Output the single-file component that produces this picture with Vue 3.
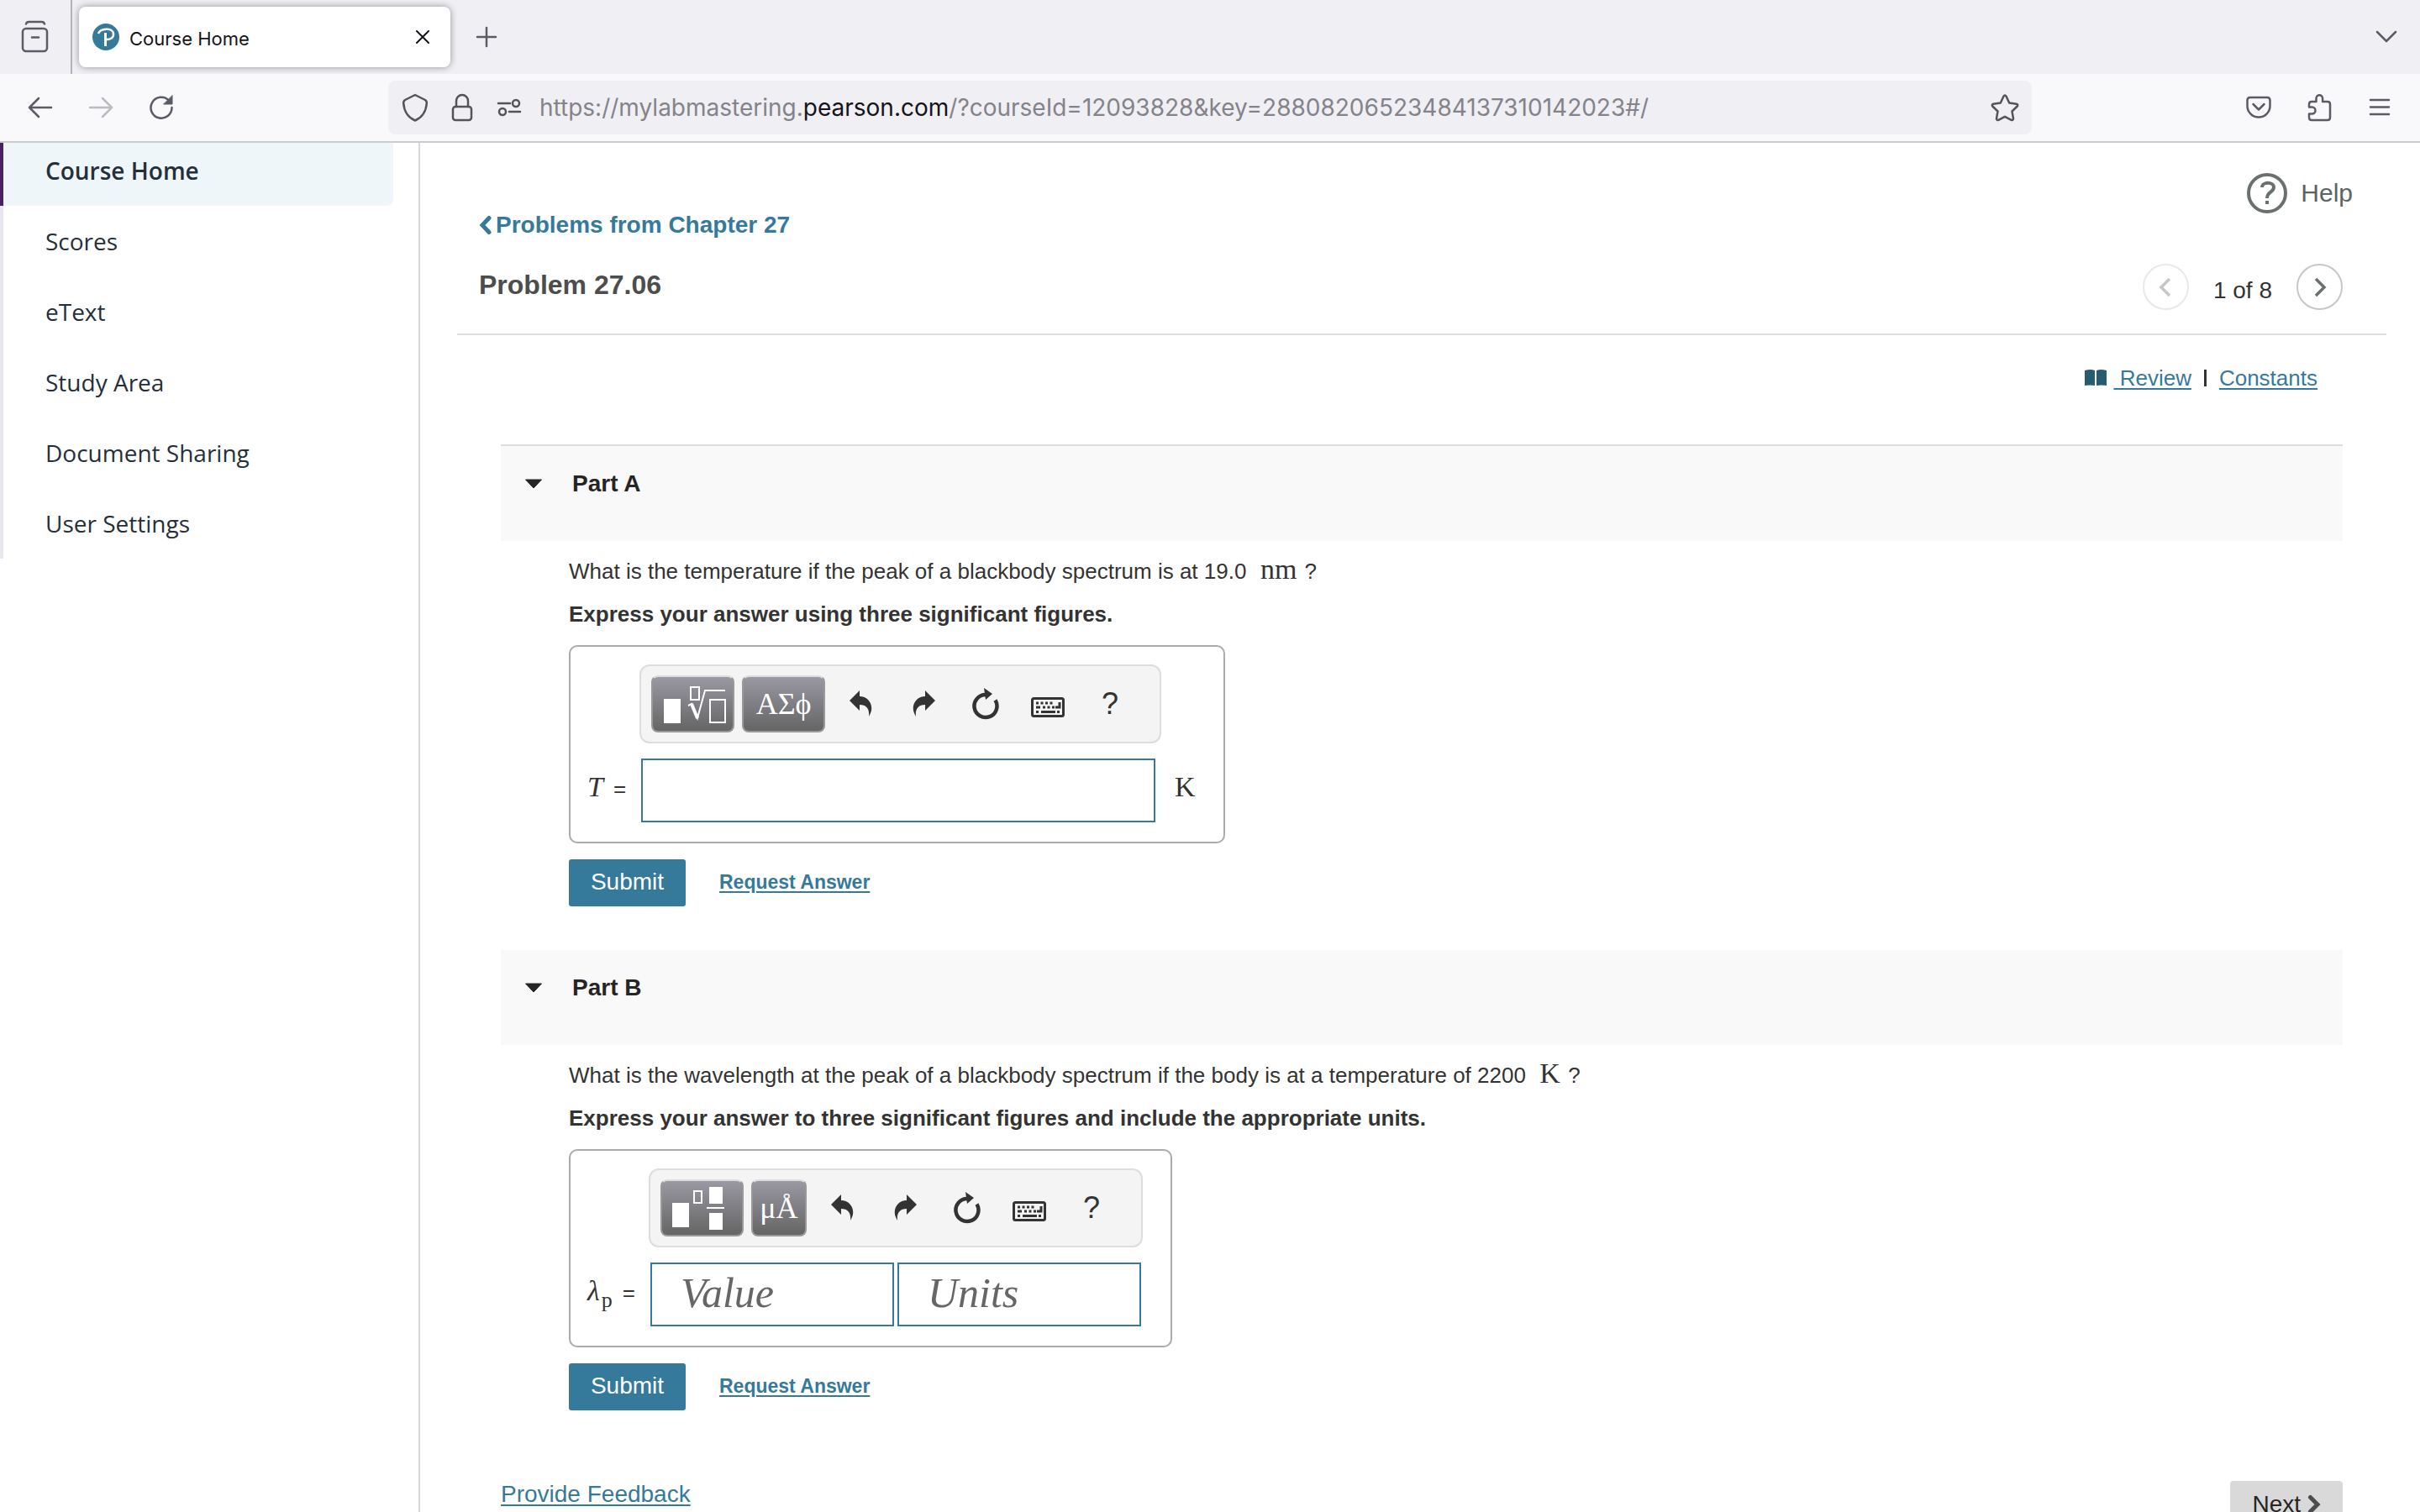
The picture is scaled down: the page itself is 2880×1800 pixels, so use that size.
<template>
  <div class="browser">
    <header class="tab-bar">
      <button class="icon-btn history" aria-label="Recent browsing">
        <svg width="34" height="40" viewBox="0 0 34 40" class="stroke">
          <path d="M6 4.500C6.500 2.500 8 2 9.500 2h15c1.500 0 3 .5 3.500 2.500" />
          <rect x="2" y="10" width="29" height="27" rx="4" />
          <path d="M13 20.500h8" />
        </svg>
      </button>
      <div class="tab">
        <svg width="32" height="32" viewBox="0 0 32 32">
          <circle cx="16" cy="16" r="16" fill="#357a9b" />
          <path d="M7 12c2-6 17-8 18 0 .5 5-4 7.500-8.500 7" fill="none" stroke="#fff" stroke-width="2.500" />
          <path d="M15.500 11v16" fill="none" stroke="#fff" stroke-width="3" />
        </svg>
        <span class="tab-title">Course Home</span>
        <button class="icon-btn close" aria-label="Close tab">
          <svg width="18" height="18" viewBox="0 0 18 18" class="stroke dark"><path d="M2 2l14 14M16 2L2 16" /></svg>
        </button>
      </div>
      <button class="icon-btn new-tab" aria-label="New tab">
        <svg width="26" height="26" viewBox="0 0 26 26" class="stroke"><path d="M13 2v22M2 13h22" /></svg>
      </button>
      <button class="icon-btn all-tabs" aria-label="List all tabs">
        <svg width="26" height="16" viewBox="0 0 26 16" class="stroke"><path d="M2 2l11 11L24 2" /></svg>
      </button>
    </header>

    <div class="nav-bar">
      <div class="nav-buttons">
        <button class="icon-btn" aria-label="Back">
          <svg width="30" height="26" viewBox="0 0 30 26" class="stroke"><path d="M28 13H2M13 2L2 13l11 11" /></svg>
        </button>
        <button class="icon-btn" aria-label="Forward" disabled>
          <svg width="30" height="26" viewBox="0 0 30 26" class="stroke faded"><path d="M2 13h26M17 2l11 11-11 11" /></svg>
        </button>
        <button class="icon-btn" aria-label="Reload">
          <svg width="30" height="30" viewBox="0 0 30 30" class="stroke">
            <path d="M24 6.500A12.500 12.500 0 1 0 27.500 15" />
            <path d="M28 1v10H18z" fill="#5b5b66" stroke-width="1" />
          </svg>
        </button>
      </div>
      <div class="url-bar">
        <svg width="32" height="34" viewBox="0 0 32 34" class="stroke gray">
          <path d="M16 2l12 6c1.500 1 2 2 1.800 4C29 22 24 29 16 32.500 8 29 3 22 2.200 12 2 10 2.500 9 4 8z" />
        </svg>
        <svg width="32" height="34" viewBox="0 0 32 34" class="stroke gray">
          <rect x="5" y="16" width="22" height="16" rx="3" />
          <path d="M9 16V9a7 7 0 0 1 14 0v7" />
        </svg>
        <svg width="32" height="34" viewBox="0 0 32 34" class="stroke gray">
          <circle cx="24" cy="12" r="4" /><circle cx="8" cy="22" r="4" />
          <path d="M3 12h14M16 22h13" />
        </svg>
        <div class="url" role="textbox" aria-label="Address">https://mylabmastering.<b>pearson.com</b>/?courseId=12093828&amp;key=28808206523484137310142023#/</div>
        <button class="icon-btn" aria-label="Bookmark this page">
          <svg width="34" height="34" viewBox="0 0 34 34" class="stroke gray">
            <path d="M15.500 3.500a1.700 1.700 0 0 1 3 0l3.700 8 8.500 1.200c1.500.2 2 1.800 1 2.800l-6.200 6 1.500 8.600c.2 1.400-1.200 2.300-2.400 1.700L17 27.800l-7.600 4c-1.200.6-2.600-.3-2.400-1.700L8.500 21.500l-6.200-6c-1-1-.5-2.600 1-2.800l8.500-1.200z" />
          </svg>
        </button>
      </div>
      <div class="extras">
        <button class="icon-btn" aria-label="Save to Pocket">
          <svg width="30" height="28" viewBox="0 0 30 28" class="stroke">
            <path d="M5 2h20q3.500 0 3.500 3.500V12a13.500 13.500 0 0 1-27 0V5.500Q1.500 2 5 2zM8.500 10l6.500 6.500 6.500-6.500" />
          </svg>
        </button>
        <button class="icon-btn" aria-label="Extensions">
          <svg width="30" height="34" viewBox="0 0 30 34" class="stroke">
            <path d="M5 10h5.500V6a3.800 3.800 0 0 1 7.600 0v4H24q3 0 3 3v16q0 3-3 3H5q-3 0-3-3v-4.500h3.500a4 4 0 0 0 0-8H2V13q0-3 3-3z" />
          </svg>
        </button>
        <button class="icon-btn" aria-label="Open application menu">
          <svg width="26" height="22" viewBox="0 0 26 22" class="stroke"><path d="M2 2h22M2 10.500h22M2 19h22" /></svg>
        </button>
      </div>
    </div>

    <div class="page">
      <nav class="sidebar">
        <ul>
          <li v-for="item in menu" :key="item">
            <a href="#" :class="{ active: item === current }" @click.prevent="current = item">{{ item }}</a>
          </li>
        </ul>
      </nav>

      <main class="content">
        <div class="problem-header">
          <div class="titles">
            <a href="#" class="back-link">
              <svg width="16" height="24" viewBox="0 0 16 24"><path d="M12 3.500L4 12l8 8.500" fill="none" stroke="#357a9b" stroke-width="5" stroke-linecap="round" /></svg>
              <span>Problems from Chapter 27</span>
            </a>
            <h1>Problem 27.06</h1>
          </div>
          <div class="tools">
            <a href="#" class="help">
              <svg width="48" height="48" viewBox="0 0 48 48" fill="none" stroke="#6a7070" stroke-width="4">
                <circle cx="24" cy="24" r="22" />
                <path d="M18 17c0-7 14-7 14 0 0 6-8 5-8 13M24 33v4" />
              </svg>
              <span>Help</span>
            </a>
            <div class="pager">
              <button aria-label="Previous problem" :disabled="index === 1" @click="index--">
                <svg width="16" height="24" viewBox="0 0 16 24"><path d="M13 2L3 12l10 10" /></svg>
              </button>
              <span class="count">{{ index }} of {{ total }}</span>
              <button aria-label="Next problem" :disabled="index === total" @click="index++">
                <svg width="16" height="24" viewBox="0 0 16 24"><path d="M3 2l10 10L3 22" /></svg>
              </button>
            </div>
          </div>
        </div>

        <div class="resources">
          <svg width="26" height="20" viewBox="0 0 26 20" fill="#255c70"><path d="M0 1q7-2 12 0v18q-6-1-12 0zM14 1q5-2 12 0v18q-6-1-12 0z" /></svg>
          <a href="#" class="review">&nbsp;Review</a>
          <span class="bar"></span>
          <a href="#">Constants</a>
        </div>

        <section v-for="part in parts" :key="part.id" class="part">
          <h2>
            <button @click="part.open = !part.open">
              <svg width="22" height="12" viewBox="0 0 22 12"><path d="M1.500 1h19L11 11z" fill="#252525" stroke="#252525" stroke-linejoin="round" /></svg>
              <span>Part {{ part.id }}</span>
            </button>
          </h2>
          <div v-if="part.open" class="part-body">
            <p>{{ part.question }} &nbsp;<span class="math">{{ part.unit }}</span> ?</p>
            <p><strong>{{ part.hint }}</strong></p>

            <div class="answer-box">
              <div class="toolbar">
                <button v-if="part.id === 'A'" class="palette wide" aria-label="Templates">
                  <svg width="94" height="62" viewBox="0 0 94 62" fill="none" stroke="#fff" stroke-width="2">
                    <rect x="12" y="25" width="20" height="29" fill="#fff" stroke="none" />
                    <rect x="44" y="11" width="10" height="15" />
                    <path d="M41 33l4-2 7 17 9-33h24" />
                    <path d="M45 31l7 17" stroke-width="4" />
                    <rect x="67" y="26" width="18" height="27" />
                  </svg>
                </button>
                <button v-else class="palette wide" aria-label="Templates">
                  <svg width="94" height="62" viewBox="0 0 94 62" fill="#fff">
                    <rect x="12" y="25" width="20" height="29" />
                    <rect x="38" y="11" width="9" height="14" fill="none" stroke="#fff" stroke-width="2" />
                    <rect x="56" y="6" width="16" height="20" />
                    <rect x="53" y="30" width="21" height="2" />
                    <rect x="56" y="37" width="16" height="20" />
                  </svg>
                </button>
                <button class="palette" :class="{ wide: part.id === 'A' }">{{ part.symbols }}</button>
                <div class="actions">
                  <button aria-label="Undo">
                    <svg width="28" height="32" viewBox="0 0 28 32"><path d="M0 12L12 0v7c11 0 19 12 11 24 1-8-2-14-11-14v7z" /></svg>
                  </button>
                  <button aria-label="Redo">
                    <svg width="28" height="32" viewBox="0 0 28 32"><path d="M28 12L16 0v7C5 7-3 19 5 31 4 23 7 17 16 17v7z" /></svg>
                  </button>
                  <button aria-label="Reset">
                    <svg width="34" height="38" viewBox="0 0 34 38">
                      <path d="M17 8a13.500 13.500 0 1 0 11.500 6.500" fill="none" stroke="#333" stroke-width="4.500" />
                      <path d="M15 0l10 7-8 7z" />
                    </svg>
                  </button>
                  <button aria-label="Keyboard shortcuts">
                    <svg width="40" height="24" viewBox="0 0 40 24" fill="none" stroke="#333" class="keyboard">
                      <rect x="1.500" y="1.500" width="37" height="21" rx="2" stroke-width="3" />
                      <path d="M6 7h22M14 12h14" stroke-width="3" stroke-dasharray="3 2.500" />
                      <path d="M6 12h5M29 12h5V6M6 17.500h3M12 17.500h17M31 17.500h3" stroke-width="3" />
                    </svg>
                  </button>
                  <button aria-label="Help">?</button>
                </div>
              </div>
              <label v-if="part.id === 'A'" class="variable" for="answer-a"><i>T</i><span>=</span></label>
              <label v-else class="variable" for="answer-b"><i>λ</i><sub>p</sub><span>=</span></label>
              <div v-if="part.id === 'A'" class="fields">
                <input id="answer-a" v-model="part.value" class="long" type="text" />
                <span class="unit">K</span>
              </div>
              <div v-else class="fields">
                <input id="answer-b" v-model="part.value" type="text" placeholder="Value" />
                <input v-model="part.units" type="text" placeholder="Units" aria-label="Units" />
              </div>
            </div>

            <div class="submit-row">
              <button class="submit">Submit</button>
              <a href="#">Request Answer</a>
            </div>
          </div>
        </section>

        <footer class="page-footer">
          <a href="#">Provide Feedback</a>
          <button class="next">
            Next
            <svg width="16" height="24" viewBox="0 0 16 24"><path d="M3.500 3.500L12 12l-8.500 8.500" fill="none" stroke="#4d4d4d" stroke-width="5" stroke-linecap="round" /></svg>
          </button>
        </footer>
      </main>
    </div>
  </div>
</template>

<script setup>
import { ref } from 'vue'

const menu = ['Course Home', 'Scores', 'eText', 'Study Area', 'Document Sharing', 'User Settings']
const current = ref('Course Home')

const index = ref(1)
const total = 8

const parts = ref([
  {
    id: 'A',
    question: 'What is the temperature if the peak of a blackbody spectrum is at 19.0',
    unit: 'nm',
    hint: 'Express your answer using three significant figures.',
    symbols: 'ΑΣϕ',
    value: '',
    open: true,
  },
  {
    id: 'B',
    question: 'What is the wavelength at the peak of a blackbody spectrum if the body is at a temperature of 2200',
    unit: 'K',
    hint: 'Express your answer to three significant figures and include the appropriate units.',
    symbols: 'μÅ',
    value: '',
    units: '',
    open: true,
  },
])
</script>

<style>
body {
  margin: 0;
  overflow: hidden;
}
</style>

<style scoped>
.browser {
  height: 100vh;
  display: flex;
  flex-direction: column;
  overflow: hidden;
  background: #fff;
  color: #333;
  font-family: 'Liberation Sans', Arial, sans-serif;
  font-size: 26px;
}
button {
  padding: 0;
  border: none;
  background: none;
  color: inherit;
  font: inherit;
  cursor: pointer;
}
a {
  color: #357a9b;
  text-underline-offset: 3px;
}
svg {
  display: block;
  flex: none;
}
.stroke {
  fill: none;
  stroke: #5b5b66;
  stroke-width: 2.5;
  stroke-linecap: round;
  stroke-linejoin: round;
}
.stroke.dark {
  stroke: #15141a;
  stroke-width: 2;
}
.stroke.gray {
  stroke: #545458;
}
.stroke.faded {
  stroke: #bcbbc1;
}
.icon-btn {
  display: flex;
  align-items: center;
  justify-content: center;
}

/* browser chrome */
.tab-bar {
  display: flex;
  align-items: center;
  height: 88px;
  flex: none;
  background: #f0eff4;
  font-family: Inter, sans-serif;
}
.history {
  width: 86px;
  height: 88px;
  border-right: 2px solid #b4b3ba;
}
.tab {
  box-sizing: border-box;
  display: flex;
  align-items: center;
  width: 442px;
  height: 72px;
  margin-left: 8px;
  padding: 0 24px 0 16px;
  border-radius: 8px;
  background: #fff;
  box-shadow: 0 0 8px rgba(0, 0, 0, 0.4);
}
.tab-title {
  flex: 1;
  margin-left: 12px;
  padding-top: 3px;
  color: #15141a;
  font-size: 22px;
}
.new-tab {
  margin-left: 30px;
}
.all-tabs {
  margin-left: auto;
  margin-right: 27px;
}
.nav-bar {
  display: flex;
  align-items: center;
  height: 80px;
  flex: none;
  border-bottom: 2px solid #cccccc;
  background: #f9f9fb;
  position: relative;
  z-index: 1;
}
.nav-buttons {
  display: flex;
  width: 462px;
  box-sizing: border-box;
  padding-left: 12px;
}
.nav-buttons .icon-btn {
  width: 72px;
}
.url-bar {
  display: flex;
  align-items: center;
  flex: 1;
  gap: 24px;
  box-sizing: border-box;
  height: 64px;
  padding: 0 15px 0 16px;
  border-radius: 8px;
  background: #f0eff4;
}
.url {
  flex: 1;
  margin-left: -4px;
  color: #84838a;
  font-family: Inter, sans-serif;
  font-size: 28px;
}
.url b {
  color: #15141a;
  font-weight: 400;
}
.extras {
  display: flex;
  align-items: center;
  justify-content: flex-end;
  gap: 43px;
  width: 462px;
  box-sizing: border-box;
  padding-right: 35px;
}

/* page */
.page {
  display: flex;
  flex: 1;
  min-height: 0;
}
.sidebar {
  width: 498px;
  flex: none;
  border-right: 2px solid #d9d9d9;
  font-family: 'Open Sans', sans-serif;
  font-size: 28px;
}
.sidebar ul {
  margin: -9px 0 0;
  padding: 0 30px 0 0;
  list-style: none;
}
.sidebar a {
  display: block;
  padding-left: 50px;
  border-left: 4px solid #e7e8ee;
  color: #252f3a;
  line-height: 84px;
  text-decoration: none;
}
.sidebar a.active {
  border-left-color: #4b2261;
  border-radius: 0 0 8px 0;
  background: #eef6fa;
  font-weight: 600;
}
.content {
  flex: 1;
  padding: 0 40px 0 44px;
}
.problem-header {
  display: flex;
  justify-content: space-between;
  height: 227px;
  border-bottom: 2px solid #e0e0e0;
}
.titles {
  padding: 82px 0 0 26px;
}
.back-link {
  display: flex;
  align-items: center;
  gap: 4px;
  font-size: 28px;
  font-weight: 700;
  line-height: 32px;
  text-decoration: none;
}
h1 {
  margin: 35px 0 0;
  color: #4d4d4d;
  font-size: 32px;
  line-height: 40px;
}
.tools {
  display: flex;
  flex-direction: column;
  align-items: flex-end;
  padding-top: 36px;
}
.help {
  display: flex;
  align-items: center;
  gap: 16px;
  margin-right: 40px;
  color: #5b6464;
  font-size: 30px;
  text-decoration: none;
}
.pager {
  display: flex;
  align-items: center;
  gap: 29px;
  margin: 60px 52px 0 0;
  font-size: 28px;
}
.pager button {
  display: flex;
  align-items: center;
  justify-content: center;
  width: 55px;
  height: 55px;
  border: 2px solid #c7c7c7;
  border-radius: 50%;
}
.pager button:disabled {
  border-color: #e9e9e9;
}
.pager path {
  fill: none;
  stroke: #6a7070;
  stroke-width: 3.5;
}
.pager button:disabled path {
  stroke: #c7c7c7;
}
.count {
  padding-top: 8px;
}
.resources {
  display: flex;
  align-items: center;
  justify-content: flex-end;
  padding: 35px 82px 63px 0;
  line-height: 32px;
}
.review {
  margin-left: 8px;
}
.bar {
  width: 3px;
  height: 20px;
  margin: 0 15px;
  background: #333;
}

/* parts */
.part {
  margin: 0 52px;
  padding-bottom: 52px;
}
h2 {
  height: 113px;
  margin: 0;
  background: #f9f9f9;
  color: #252525;
  font-size: 28px;
  line-height: 32px;
}
.resources + .part h2 {
  border-top: 2px solid #dddddd;
}
h2 button {
  display: flex;
  align-items: center;
  gap: 35px;
  padding: 29px 0 0 28px;
}
.part-body {
  padding: 11px 0 0 81px;
}
.part-body p {
  margin: 0;
  line-height: 51px;
}
.math,
.unit {
  font-family: 'Liberation Serif', serif;
  font-size: 34px;
  line-height: 1;
}
.math {
  margin: 0 2px;
}
.answer-box {
  display: grid;
  grid-template-columns: auto auto;
  grid-template-rows: 94px 76px;
  row-gap: 18px;
  width: fit-content;
  margin-top: 11px;
  padding: 21px 33px 23px 20px;
  border: 2px solid #aaaaaa;
  border-radius: 10px;
}
.toolbar {
  grid-column: 2;
  justify-self: start;
  display: flex;
  align-items: center;
  padding: 0 22px 0 12px;
  border: 2px solid #dddddd;
  border-radius: 12px;
  background: #f4f4f4;
}
.palette {
  box-sizing: border-box;
  display: flex;
  align-items: center;
  justify-content: center;
  width: 66px;
  height: 68px;
  margin-right: 9px;
  border: 2px solid #999999;
  border-top-color: #dddddd;
  border-radius: 8px;
  background: linear-gradient(#9a98a2, #656565);
  color: #fff;
  font-family: 'Liberation Serif', serif;
  font-size: 36px;
}
.palette.wide {
  width: 99px;
}
.actions {
  display: flex;
  margin-left: -3px;
  fill: #333;
}
.actions button {
  display: flex;
  align-items: center;
  justify-content: center;
  width: 74px;
  height: 44px;
  font-size: 36px;
}
.keyboard {
  margin-top: 8px;
}
.variable {
  grid-column: 1;
  align-self: center;
  padding: 0 16px 8px 0;
  font-family: 'Liberation Serif', serif;
  font-size: 34px;
}
.variable span {
  margin-left: 12px;
  font-family: 'Liberation Sans', sans-serif;
  font-size: 26px;
}
.variable sub {
  margin-left: 2px;
  font-size: 26px;
  line-height: 0;
}
.fields {
  display: flex;
  align-items: center;
  gap: 4px;
  margin-left: 2px;
}
.fields input {
  box-sizing: border-box;
  width: 290px;
  height: 76px;
  padding: 0 34px 4px;
  border: 2px solid #357a9b;
  border-radius: 0;
  background: #fff;
  color: #333;
  font-family: 'Liberation Serif', serif;
  font-size: 50px;
  outline: none;
}
.fields input.long {
  width: 612px;
}
.fields input::placeholder {
  color: #666;
  font-style: italic;
  opacity: 1;
}
.unit {
  margin-left: 19px;
  padding-bottom: 8px;
}
.submit-row {
  display: flex;
  align-items: center;
  gap: 40px;
  margin-top: 19px;
}
.submit {
  width: 139px;
  height: 56px;
  padding-bottom: 3px;
  border-radius: 3px;
  background: #357a9b;
  color: #fff;
  font-size: 28px;
}
.submit-row a {
  padding-bottom: 2px;
  font-size: 23px;
  font-weight: 700;
}
.page-footer {
  display: flex;
  align-items: flex-start;
  justify-content: space-between;
  margin: 32px 52px 0;
  font-size: 28px;
  line-height: 32px;
}
.next {
  display: flex;
  align-items: center;
  gap: 8px;
  padding: 12px 26px;
  border-radius: 4px;
  background: #d9d9d9;
  color: #252525;
}
</style>
